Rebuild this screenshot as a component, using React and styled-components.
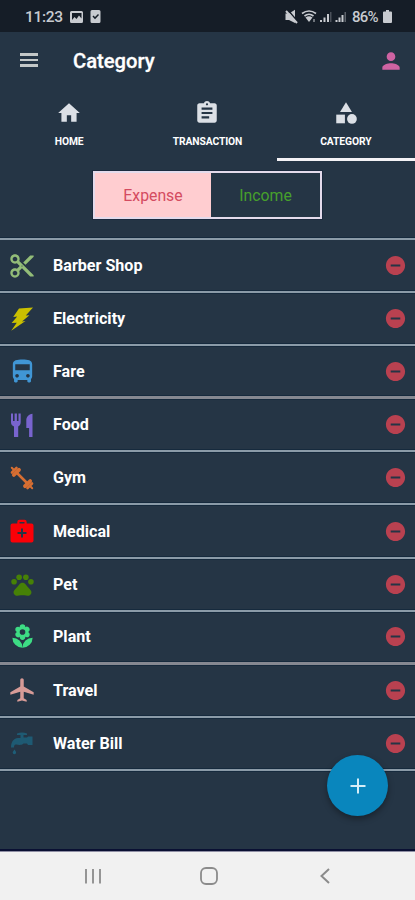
import React from 'react';
import styled, { createGlobalStyle, css } from 'styled-components';
import {
  MdAssignment, MdCategory, MdContentCut, MdDirectionsBus, MdHome, MdLocalAirport,
  MdLocalFlorist, MdPerson, MdPets, MdRemoveCircle,
} from 'react-icons/md';

const BoltIcon = () => (
  <svg viewBox="0 0 24 24" fill="currentColor">
    <path d="M9 1.6 L23 .5 L15.8 8.6 L19.4 8.3 L12 14.4 L15.5 14 L1.2 23.8 L6.8 15.7 L1.6 16 L7.2 9.6 L3.2 9.9 Z" />
  </svg>
);

const CutleryIcon = () => (
  <svg viewBox="0 0 24 24" fill="currentColor">
    <path d="M1 .5h2V8h1.600V.5h2.300V8h1.600V.5h2.200v8.800c0 2.300-1.100 3.600-2.500 4.200V24H4V13.500C2.200 12.800 1 11.400 1 9.300Z" />
    <path d="M22.500.8V24h-3.400V15H16.300V7.500C16.300 4 18.500 1.300 22.500.8Z" />
  </svg>
);

const DumbbellIcon = () => (
  <svg viewBox="0 0 24 24" fill="none" stroke="currentColor" strokeLinecap="round">
    <path d="M6.500 6.500 17.500 17.500" strokeWidth="2.600" />
    <path d="M9 3.800 3.800 9M20.200 15 15 20.200" strokeWidth="3.800" />
    <path d="M6.500 2 2 6.500M22 17.500 17.500 22" strokeWidth="2.600" />
    <path d="M1.800 1.800 4 4M20 20 22.200 22.200" strokeWidth="2" />
  </svg>
);

const MedkitIcon = () => (
  <svg viewBox="0 0 24 24" fill="currentColor">
    <path
      fillRule="evenodd"
      d="M7.300 4.500V3q0-2.200 2.200-2.200h5Q16.700.8 16.700 3v1.500h4.800q2 0 2 2v15q0 2-2 2h-19q-2 0-2-2v-15q0-2 2-2ZM9.500 4.500h5V3h-5ZM11 9.500V13H7.500v2H11v3.500h2V15h3.500v-2H13V9.500Z"
    />
  </svg>
);

const FaucetIcon = () => (
  <svg viewBox="0 0 24 24" fill="currentColor">
    <path d="M7 2.500Q12 .5 17 2.500V4h-3.500v2.500H17l1-1h4.500V14H18l-1-1.500h-3.500c-2 2-5 1.500-7 1-2-.5-2.500 1-2.500 3H1c0-5 2-9 7-9.500h2.500V4H7Z" opacity=".9" />
    <path d="M4.500 18.500c1 1.400 1.600 2.200 1.600 3a1.700 1.700 0 0 1-3.400 0c0-.8.8-1.600 1.800-3Z" />
  </svg>
);

const categories = [
  { name: 'Barber Shop', icon: MdContentCut, color: '#93bd78', size: 28 },
  { name: 'Electricity', icon: BoltIcon, color: '#cbc000' },
  { name: 'Fare', icon: MdDirectionsBus, color: '#4096d5', size: 29, thick: true },
  { name: 'Food', icon: CutleryIcon, color: '#7964ce' },
  { name: 'Gym', icon: DumbbellIcon, color: '#d66e32' },
  { name: 'Medical', icon: MedkitIcon, color: '#fb0007' },
  { name: 'Pet', icon: MdPets, color: '#468106', size: 27 },
  { name: 'Plant', icon: MdLocalFlorist, color: '#3ddc84', size: 27, thick: true },
  { name: 'Travel', icon: MdLocalAirport, color: '#d79b97', size: 28 },
  { name: 'Water Bill', icon: FaucetIcon, color: '#1e5e78' },
];

const tabs = [
  { label: 'HOME', icon: MdHome },
  { label: 'TRANSACTION', icon: MdAssignment },
  { label: 'CATEGORY', icon: MdCategory, active: true },
];

function StatusIcons() {
  return (
    <svg width="67" height="16" viewBox="0 0 67 16" fill="currentColor">
      <path d="M.5 4.500h3.500L10 .8V14L4 11H.5Z" />
      <path d="M2.500.5 13 13" stroke="#151d27" strokeWidth="1.500" />
      <path d="M1 2 12 14" stroke="currentColor" strokeWidth="2" />
      <g fill="none" stroke="currentColor" strokeWidth="1.700">
        <path d="M17 4.500Q24-.5 31 4.500M19.500 7Q24 3.500 28.500 7" />
      </g>
      <path d="M20.500 8.500q3.500-2.500 7 0L24 13Z" />
      <path d="M28 10h2v3h-2z" opacity=".5" />
      <path d="M35 11h2v2h-2zM38.500 8.500h2V13h-2zM42 5h2v8h-2z" />
      <path d="M45 3h1.500v10H45z" opacity=".3" />
      <path d="M50.500 11h2v2h-2zM53.500 8.500h2V13h-2zM56.500 6h2v7h-2z" />
      <path d="M59.500 3h1.500v10h-1.500z" opacity=".4" />
    </svg>
  );
}

function CategoryRow({ item }) {
  const Icon = item.icon;
  return (
    <Row $thick={item.thick}>
      <RowIcon $color={item.color} $size={item.size}><Icon /></RowIcon>
      <RowName>{item.name}</RowName>
      <RemoveButton aria-label={`Remove ${item.name}`}><MdRemoveCircle /></RemoveButton>
    </Row>
  );
}

function App() {
  return (
    <Screen>
      <GlobalStyle />
      <StatusBar>
        <Clock>11:23</Clock>
        <svg width="32" height="14" viewBox="0 0 32 14" fill="currentColor">
          <path fillRule="evenodd" d="M1.500 1h10q1.500 0 1.500 1.500v9q0 1.500-1.500 1.500h-10Q0 13 0 11.500v-9Q0 1 1.500 1ZM2 3v7l2.500-3 2 2L9 5.500l2.500 3V3Z" />
          <path fillRule="evenodd" d="M22 0h7q1.500 0 1.500 1.500v10q0 1.500-1.500 1.500h-7q-1.500 0-1.500-1.500v-10Q20.500 0 22 0ZM23.500 5.500l-1 1 2.500 2.700 4-4.200-1-1-3 3Z" />
        </svg>
        <StatusRight>
          <StatusIcons />
          <Battery>86%</Battery>
          <svg width="9" height="13" viewBox="0 0 9 13" fill="currentColor">
            <path d="M3 0h3v1.500h2q1 0 1 1V12q0 1-1 1H1q-1 0-1-1V2.500q0-1 1-1h2Z" />
          </svg>
        </StatusRight>
      </StatusBar>

      <Header>
        <MenuButton aria-label="Menu"><span /><span /><span /></MenuButton>
        <Title>Category</Title>
        <Profile><MdPerson /></Profile>
      </Header>

      <Tabs>
        {tabs.map(({ label, icon: Icon, active }) => (
          <Tab key={label} $active={active}>
            <Icon />
            <span>{label}</span>
          </Tab>
        ))}
      </Tabs>

      <Switcher>
        <SwitchOption $active>Expense</SwitchOption>
        <SwitchOption>Income</SwitchOption>
      </Switcher>

      <List>
        {categories.map((item) => <CategoryRow key={item.name} item={item} />)}
      </List>

      <AddButton aria-label="Add category">
        <svg width="16" height="16" viewBox="0 0 16 16" stroke="#d5eef8" strokeWidth="2">
          <path d="M8 .5v15M.5 8h15" />
        </svg>
      </AddButton>

      <NavBar>
        <svg width="18" height="18" viewBox="0 0 18 18" stroke="#959595" strokeWidth="2">
          <path d="M2 2v14.500M9 2v14.500M16 2v14.500" />
        </svg>
        <svg width="18" height="18" viewBox="0 0 18 18" fill="none" stroke="#8b8b8b" strokeWidth="1.800">
          <rect x="1" y="1" width="16" height="16" rx="5" />
        </svg>
        <svg width="18" height="18" viewBox="0 0 18 18" fill="none" stroke="#8b8b8b" strokeWidth="2">
          <path d="M13 2 5.500 9l7.500 7" />
        </svg>
      </NavBar>
    </Screen>
  );
}

export default App;

const GlobalStyle = createGlobalStyle`
  * { box-sizing: border-box; }
  body { margin: 0; background: #253545; }
  button { border: 0; padding: 0; background: none; font: inherit; }
  svg { display: block; flex: none; }
`;

const Screen = styled.div`
  position: relative;
  display: flex;
  flex-direction: column;
  width: 415px;
  height: 900px;
  overflow: hidden;
  background: #253545;
  color: #fff;
  font-family: Roboto, sans-serif;
`;

const StatusBar = styled.div`
  display: flex;
  align-items: center;
  height: 32px;
  padding: 1px 23px 0 25px;
  background: #151d27;
  color: #c8cbd0;
`;

const Clock = styled.span`
  width: 45px;
  font-size: 15.5px;
  font-weight: 500;
  letter-spacing: -0.3px;
`;

const StatusRight = styled.div`
  display: flex;
  align-items: center;
  margin-left: auto;
`;

const Battery = styled.span`
  width: 31px;
  font-size: 15px;
  font-weight: 500;
  letter-spacing: -0.8px;
`;

const Header = styled.header`
  display: flex;
  align-items: center;
  height: 58px;
  padding: 0 11px 0 20px;
`;

const MenuButton = styled.button`
  display: flex;
  flex-direction: column;
  gap: 3px;
  width: 18px;
  margin-bottom: 2px;

  span {
    height: 2.5px;
    background: #c4c8c8;
  }
`;

const Title = styled.h1`
  margin: 0 0 0 35px;
  font-size: 20.2px;
  font-weight: 500;
  -webkit-text-stroke: 0.3px #fff;
`;

const Profile = styled.div`
  margin-left: auto;
  color: #ce63a2;
  svg { width: 26px; height: 26px; margin-top: -1px; }
`;

const Tabs = styled.nav`
  display: grid;
  grid-template-columns: repeat(3, 1fr);
  height: 71px;
`;

const Tab = styled.button`
  display: flex;
  flex-direction: column;
  align-items: center;
  padding-top: 10px;
  border-bottom: 3px solid ${({ $active }) => ($active ? '#f4f2f5' : 'transparent')};
  color: #fff;
  font-size: 10.3px;
  font-weight: 700;
  letter-spacing: -0.1px;

  svg { width: 26px; height: 26px; color: #dce0e6; }
  span { margin-top: 9px; line-height: 13px; }
`;

const Switcher = styled.div`
  display: grid;
  grid-template-columns: 116px 1fr;
  width: 229px;
  height: 48px;
  margin: 10px 0 19px 93px;
  border: 2px solid #e4daeb;
  box-shadow: 0 0 0 1px #1c2a3e;
`;

const SwitchOption = styled.button`
  padding-top: 1px;
  color: #47a02c;
  font-size: 15.8px;

  ${({ $active }) => $active && css`
    background: #ffcdd0;
    color: #d44b60;
  `}
`;

const List = styled.div`
  border-top: 2px solid #8b9ba8;
  box-shadow: 0 -1px 0 #162a3d;
`;

const Row = styled.div`
  display: flex;
  align-items: center;
  height: 53.1px;
  padding: 0 8px 0 10px;
  border-bottom: ${({ $thick }) => ($thick ? '3px solid #858891' : '2px solid #8b9ba8')};
  box-shadow: 0 1px 0 #162a3d, inset 0 -1px 0 #162a3d;
`;

const RowIcon = styled.div`
  display: flex;
  justify-content: center;
  width: 24px;
  color: ${({ $color }) => $color};

  svg {
    width: ${({ $size }) => $size || 24}px;
    height: ${({ $size }) => $size || 24}px;
  }
`;

const RowName = styled.span`
  margin-left: 19px;
  font-size: 16.1px;
  font-weight: 700;
`;

const RemoveButton = styled.button`
  margin-left: auto;
  color: #b94150;
  svg { width: 23px; height: 23px; }
`;

const AddButton = styled.button`
  position: absolute;
  right: 27px;
  bottom: 84px;
  display: flex;
  align-items: center;
  justify-content: center;
  width: 61px;
  height: 61px;
  border-radius: 50%;
  background: #0986bd;
  box-shadow: 0 3px 6px rgba(0, 0, 0, 0.35);
`;

const NavBar = styled.footer`
  display: flex;
  align-items: center;
  justify-content: space-between;
  height: 49px;
  margin-top: auto;
  padding: 0 81px 0 84px;
  border-top: 1px solid #8f8fa4;
  background: #f1f1f1;
  box-shadow: 0 -2px 0 #0a1033;
`;
